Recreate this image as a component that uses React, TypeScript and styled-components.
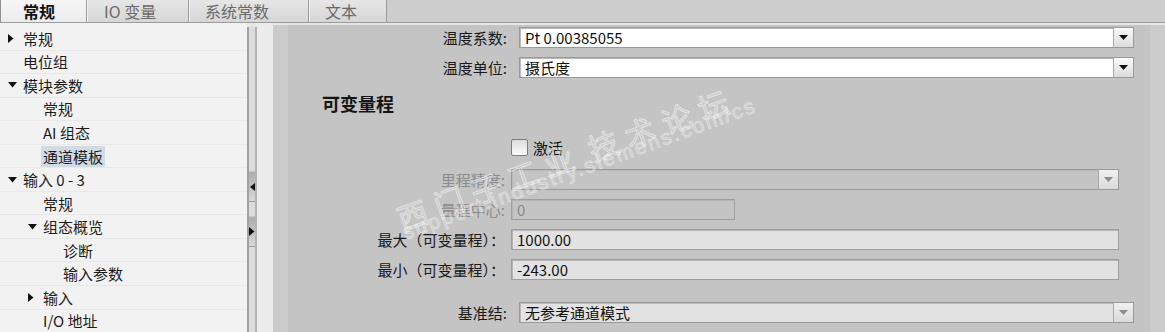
import styled, { createGlobalStyle } from 'styled-components';

const GlobalStyle = createGlobalStyle`
  html, body {
    margin: 0;
    padding: 0;
    background: #cdcdcd;
    font-family: "Noto Sans CJK SC", "Noto Sans", sans-serif;
  }
`;

type TreeItem = {
  label: string;
  level: number;
  arrow?: 'right' | 'down';
  selected?: boolean;
};

const treeItems: TreeItem[] = [
  { label: '常规', level: 0, arrow: 'right' },
  { label: '电位组', level: 0 },
  { label: '模块参数', level: 0, arrow: 'down' },
  { label: '常规', level: 1 },
  { label: 'AI 组态', level: 1 },
  { label: '通道模板', level: 1, selected: true },
  { label: '输入 0 - 3', level: 0, arrow: 'down' },
  { label: '常规', level: 1 },
  { label: '组态概览', level: 1, arrow: 'down' },
  { label: '诊断', level: 2 },
  { label: '输入参数', level: 2 },
  { label: '输入', level: 1, arrow: 'right' },
  { label: 'I/O 地址', level: 1 },
];

const tabs = [
  { label: '常规', width: 87, pad: 22, active: true },
  { label: 'IO 变量', width: 102, pad: 16 },
  { label: '系统常数', width: 120, pad: 15 },
  { label: '文本', width: 78, pad: 15 },
];

const Arrow = ({ dir }: { dir: 'right' | 'down' | 'left' }) => {
  if (dir === 'down') {
    return (
      <svg width="9" height="6" viewBox="0 0 9 6">
        <polygon points="0,0 9,0 4.5,5.5" fill="#111" />
      </svg>
    );
  }
  if (dir === 'left') {
    return (
      <svg width="5" height="8" viewBox="0 0 5 8">
        <polygon points="5,0 5,8 0,4" fill="#111" />
      </svg>
    );
  }
  return (
    <svg width="6" height="9" viewBox="0 0 6 9">
      <polygon points="0,0 5.5,4.5 0,9" fill="#111" />
    </svg>
  );
};

const DropArrow = ({ color }: { color: string }) => (
  <svg width="9" height="5" viewBox="0 0 9 5">
    <polygon points="0,0 9,0 4.5,5" fill={color} />
  </svg>
);

type SelectProps = {
  value?: string;
  bg: string;
  disabled?: boolean;
};

const Select = ({ value, bg, disabled }: SelectProps) => (
  <SelectBox $bg={bg}>
    <Value $color="#111">{value}</Value>
    <DropButton $disabled={disabled}>
      <DropArrow color={disabled ? '#8c8c8c' : '#111'} />
    </DropButton>
  </SelectBox>
);

export default function App() {
  return (
    <Page>
      <GlobalStyle />
      <TabBar>
        {tabs.map((t) => (
          <Tab key={t.label} $width={t.width} $pad={t.pad} $active={!!t.active}>
            {t.label}
          </Tab>
        ))}
      </TabBar>
      <Body>
        <Tree>
          {treeItems.map((item, i) => (
            <TreeRow key={i} $level={item.level}>
              <ArrowSlot>{item.arrow && <Arrow dir={item.arrow} />}</ArrowSlot>
              <TreeLabel $selected={!!item.selected}>{item.label}</TreeLabel>
            </TreeRow>
          ))}
        </Tree>
        <Splitter>
          <SplitButton>
            <Arrow dir="left" />
          </SplitButton>
          <SplitButton>
            <Arrow dir="right" />
          </SplitButton>
        </Splitter>
        <Gutter />
        <Content>
          <Inner>
            <FieldRow $label={219} $gap={12} $right={16}>
              <Label $color="#1a1a1a">温度系数:</Label>
              <Select value="Pt 0.00385055" bg="#ffffff" />
            </FieldRow>
            <FieldRow $label={219} $gap={12} $right={16}>
              <Label $color="#1a1a1a">温度单位:</Label>
              <Select value="摄氏度" bg="#ffffff" />
            </FieldRow>

            <Heading>可变量程</Heading>

            <CheckRow>
              <CheckBox />
              <CheckLabel>激活</CheckLabel>
            </CheckRow>

            <FieldRow $label={217} $gap={6} $right={31}>
              <Label $color="#8b8b8b">里程精度:</Label>
              <Select bg="transparent" disabled />
            </FieldRow>
            <FieldRow $label={217} $gap={6} $right={31}>
              <Label $color="#8b8b8b">量程中心:</Label>
              <TextBox $bg="transparent" $width="224px">
                <Value $color="#8b8b8b">0</Value>
              </TextBox>
            </FieldRow>
            <FieldRow $label={217} $gap={6} $right={31}>
              <Label $color="#1a1a1a">最大（可变量程）：</Label>
              <TextBox $bg="#e2e2e2">
                <Value $color="#111">1000.00</Value>
              </TextBox>
            </FieldRow>
            <FieldRow $label={217} $gap={6} $right={31}>
              <Label $color="#1a1a1a">最小（可变量程）：</Label>
              <TextBox $bg="#e2e2e2">
                <Value $color="#111">-243.00</Value>
              </TextBox>
            </FieldRow>

            <Spacer />

            <FieldRow $label={219} $gap={12} $right={16}>
              <Label $color="#1a1a1a">基准结:</Label>
              <Select value="无参考通道模式" bg="#e2e2e2" disabled />
            </FieldRow>
          </Inner>
        </Content>
      </Body>
      <Watermark>
        <MarkTitle>
          西门子工业<MarkGap />技术论坛
        </MarkTitle>
        <MarkUrl>support.industry.siemens.com/cs</MarkUrl>
      </Watermark>
    </Page>
  );
}

const Page = styled.div`
  position: relative;
  height: 100vh;
  display: flex;
  flex-direction: column;
  overflow: hidden;
`;

const TabBar = styled.div`
  height: 22px;
  flex: 0 0 22px;
  display: flex;
  background: #cdcdcd;
  border-bottom: 1px solid #9b9b9b;
`;

const Tab = styled.div<{ $width: number; $pad: number; $active: boolean }>`
  box-sizing: border-box;
  width: ${(p) => p.$width}px;
  padding: 1px 0 0 ${(p) => p.$pad}px;
  height: 22px;
  line-height: 21px;
  font-size: 16px;
  font-weight: ${(p) => (p.$active ? 700 : 400)};
  color: ${(p) => (p.$active ? '#111' : '#6a6a6a')};
  background: ${(p) =>
    p.$active
      ? 'linear-gradient(#f6f6f6, #ececec)'
      : 'linear-gradient(#e6e6e6, #d6d6d6)'};
  border-left: 1px solid ${(p) => (p.$active ? '#8f8f8f' : '#f2f2f2')};
  border-right: 1px solid #9a9a9a;
  white-space: nowrap;
`;

const Body = styled.div`
  flex: 1;
  display: flex;
  background: #e6e6e6;
  min-height: 0;
`;

const Tree = styled.div`
  width: 247px;
  flex: 0 0 247px;
  background: #f2f2f2;
  padding-top: 4px;
  box-sizing: border-box;
`;

const TreeRow = styled.div<{ $level: number }>`
  box-sizing: border-box;
  height: 23.55px;
  display: flex;
  align-items: center;
  padding-left: ${(p) => 8 + p.$level * 20}px;
  border-bottom: 1px solid #e8e8e8;
`;

const ArrowSlot = styled.span`
  width: 15px;
  flex: 0 0 15px;
  display: flex;
  align-items: center;
`;

const TreeLabel = styled.span<{ $selected: boolean }>`
  font-size: 15px;
  line-height: 21px;
  color: #1c1c1c;
  white-space: nowrap;
  padding: 0 2px;
  margin-left: -2px;
  background: ${(p) => (p.$selected ? '#d2dae3' : 'transparent')};
`;

const Splitter = styled.div`
  box-sizing: border-box;
  width: 10px;
  flex: 0 0 10px;
  margin-top: 4px;
  background: #dcdcdc;
  border-left: 2px solid #a2a2a2;
  border-right: 2px solid #b3b3b3;
  display: flex;
  flex-direction: column;
  gap: 14px;
  padding-top: 144px;
`;

const SplitButton = styled.div`
  height: 29px;
  display: flex;
  align-items: center;
  justify-content: center;
  background: linear-gradient(#acacac, #d8d8d8);
  border-top: 1px solid #c8c8c8;
  border-bottom: 1px solid #9c9c9c;
`;

const Gutter = styled.div`
  width: 16px;
  flex: 0 0 16px;
  background: #ececec;
`;

const Content = styled.div`
  flex: 1;
  margin-top: 2px;
  background: #cbcbcb;
  padding: 0 15px;
  display: flex;
`;

const Inner = styled.div`
  flex: 1;
  background: #c4c4c4;
  padding-top: 2px;
  display: flex;
  flex-direction: column;
`;

const FieldRow = styled.div<{ $label: number; $gap: number; $right: number }>`
  display: grid;
  grid-template-columns: ${(p) => p.$label}px 1fr;
  column-gap: ${(p) => p.$gap}px;
  margin-right: ${(p) => p.$right}px;
  height: 21px;
  margin-bottom: 9px;
  align-items: center;
`;

const Label = styled.div<{ $color: string }>`
  text-align: right;
  white-space: nowrap;
  font-size: 15px;
  line-height: 21px;
  color: ${(p) => p.$color};
`;

const SelectBox = styled.div<{ $bg: string }>`
  box-sizing: border-box;
  height: 21px;
  display: flex;
  align-items: stretch;
  background: ${(p) => p.$bg};
  border: 1px solid #999999;
  box-shadow: inset 1px 1px 0 #b9b9b9;
`;

const Value = styled.span<{ $color: string }>`
  flex: 1;
  padding-left: 5px;
  font-size: 15px;
  line-height: 19px;
  color: ${(p) => p.$color};
  white-space: nowrap;
  overflow: hidden;
`;

const DropButton = styled.div<{ $disabled?: boolean }>`
  width: 19px;
  flex: 0 0 19px;
  display: flex;
  align-items: center;
  justify-content: center;
  border-left: 1px solid #a8a8a8;
  background: ${(p) =>
    p.$disabled
      ? 'linear-gradient(#f0f0f0, #dadada)'
      : 'linear-gradient(#fafafa, #dcdcdc)'};
`;

const TextBox = styled.div<{ $bg: string; $width?: string }>`
  box-sizing: border-box;
  height: 21px;
  width: ${(p) => p.$width ?? 'auto'};
  display: flex;
  background: ${(p) => p.$bg};
  border: 1px solid #9e9e9e;
  box-shadow: inset 1px 1px 0 #b4b4b4;
`;

const Heading = styled.div`
  margin: 4px 0 0 34px;
  font-size: 18px;
  font-weight: 700;
  line-height: 24px;
  color: #151515;
`;

const CheckRow = styled.div`
  display: flex;
  align-items: center;
  gap: 5px;
  margin: 24px 0 13px 223px;
  height: 17px;
`;

const CheckBox = styled.span`
  box-sizing: border-box;
  width: 17px;
  height: 17px;
  border: 1px solid #7e7e7e;
  border-radius: 2px;
  background: linear-gradient(#dcdcdc, #fbfbfb);
`;

const CheckLabel = styled.span`
  font-size: 15px;
  line-height: 17px;
  color: #111;
`;

const Spacer = styled.div`
  height: 15px;
`;

const Watermark = styled.div`
  position: absolute;
  left: 398px;
  top: 204px;
  transform-origin: 0 15px;
  transform: rotate(-20deg);
  pointer-events: none;
  white-space: nowrap;
`;

const MarkTitle = styled.div`
  font-family: "Noto Sans CJK SC", sans-serif;
  font-size: 30px;
  line-height: 30px;
  letter-spacing: 9px;
  color: rgba(255, 255, 255, 0.1);
  -webkit-text-stroke: 1px rgba(255, 255, 255, 0.5);
  display: flex;
`;

const MarkGap = styled.span`
  width: 8px;
`;

const MarkUrl = styled.div`
  margin-top: -11px;
  font-family: "Liberation Sans", Arial, sans-serif;
  font-size: 21px;
  line-height: 22px;
  letter-spacing: 2.3px;
  color: rgba(255, 255, 255, 0.12);
  -webkit-text-stroke: 0.8px rgba(255, 255, 255, 0.45);
`;
